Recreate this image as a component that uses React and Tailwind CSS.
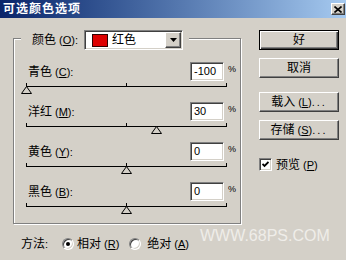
import React from "react";

const FONT = "font-['Liberation_Sans','Noto_Sans_CJK_SC',sans-serif]";

function Key({ k }) {
  return (
    <span className="text-[11px] ml-[3px]">
      (<span className="underline underline-offset-1">{k}</span>)
    </span>
  );
}

function Raised({ className = "", children, isDefault }) {
  const frame = isDefault
    ? "border border-black shadow-[inset_1px_1px_0_#fff,inset_-1px_-1px_0_#404040,inset_-2px_-2px_0_#808080]"
    : "border border-t-white border-l-white border-b-[#404040] border-r-[#404040] shadow-[inset_-1px_-1px_0_#808080]";
  return (
    <div className={`bg-[#d4d0c8] flex items-center justify-center ${frame} ${className}`}>
      {children}
    </div>
  );
}

const sunken =
  "border border-t-[#808080] border-l-[#808080] border-b-white border-r-white shadow-[inset_1px_1px_0_#404040,inset_-1px_-1px_0_#d4d0c8]";

function SliderSection({ zh, k, value }) {
  const pos = ((value + 100) / 200) * 200;
  return (
    <div className="h-[40px] pl-[12px]">
      <div className="flex items-center h-[19px] w-[212px]">
        <span className="ml-[2px] text-[12px] leading-none text-black">
          {zh}
          <Key k={k} />
          <span className="text-[11px]">:</span>
        </span>
        <div className={`ml-auto w-[34px] h-[19px] bg-white flex items-center pl-[3px] text-[11px] text-black ${sunken}`}>
          {value}
        </div>
        <span className="w-[14px] self-start pt-[3px] pl-[4px] text-[9px] leading-none text-black">%</span>
      </div>
      <div className="relative mt-[2px] w-[201px] h-[4px] border-b border-black flex justify-between">
        <span className="w-px h-[3px] bg-black" />
        <span className="w-px h-[3px] bg-black" />
        <span className="w-px h-[3px] bg-black" />
        <svg
          className="absolute top-[3px]"
          style={{ left: pos - 5 }}
          width="11"
          height="8"
          viewBox="0 0 11 8"
        >
          <path d="M5.5 0.5 L10.5 7.5 L0.5 7.5 Z" fill="#d4d0c8" stroke="#000" strokeWidth="1" />
        </svg>
      </div>
    </div>
  );
}

function Radio({ checked }) {
  return (
    <div className="w-[12px] h-[12px] rounded-full bg-white border border-t-[#808080] border-l-[#808080] border-b-white border-r-white shadow-[inset_1px_1px_0_#404040,inset_-1px_-1px_0_#d4d0c8] flex items-center justify-center">
      {checked && <div className="w-[4px] h-[4px] rounded-full bg-black" />}
    </div>
  );
}

export default function App() {
  return (
    <div className={`w-[346px] h-[260px] bg-[#d4d0c8] relative overflow-hidden ${FONT}`}>
      {/* Title bar */}
      <div className="h-[18px] flex items-center bg-gradient-to-r from-[#0a246a] to-[#a6caf0]">
        <span className="pl-[3px] text-white font-bold text-[12px] leading-none tracking-[1px]">可选颜色选项</span>
        <Raised className="ml-auto mr-[1px] w-[14px] h-[12px]">
          <svg width="8" height="7" viewBox="0 0 8 7">
            <path d="M0.5 0.5 L7.5 6.5 M7.5 0.5 L0.5 6.5" stroke="#000" strokeWidth="1.6" />
          </svg>
        </Raised>
      </div>

      <div className="flex">
        {/* Left column */}
        <div className="pl-[13px] pt-[20px]">
          <div className="w-[228px] h-[186px] border border-[#808080] shadow-[inset_1px_1px_0_#fff,1px_1px_0_#fff]">
            {/* Legend */}
            <div className="-mt-[9px] ml-[7px] w-fit pl-[11px] pr-[6px] h-[20px] bg-[#d4d0c8] flex items-center">
              <span className="w-[52px] text-[12px] leading-none text-black whitespace-nowrap">
                颜色
                <Key k="O" />
                <span className="text-[11px]">:</span>
              </span>
              <div className={`w-[99px] h-[20px] bg-white flex items-center ${sunken}`}>
                <div className="ml-[7px] w-[16px] h-[13px] bg-[#dd0000] border border-[#300000]" />
                <span className="ml-[4px] text-[12px] leading-none text-black">红色</span>
                <Raised className="ml-auto mr-[1px] w-[16px] h-[16px]">
                  <svg width="7" height="4" viewBox="0 0 7 4">
                    <path d="M0 0 H7 L3.5 4 Z" fill="#000" />
                  </svg>
                </Raised>
              </div>
            </div>

            <div className="mt-[12px]">
              <SliderSection zh="青色" k="C" value={-100} />
              <SliderSection zh="洋红" k="M" value={30} />
              <SliderSection zh="黄色" k="Y" value={0} />
              <SliderSection zh="黑色" k="B" value={0} />
            </div>
          </div>

          {/* Method row */}
          <div className="mt-[12px] h-[16px] pl-[8px] flex items-center text-black">
            <span className="w-[41px] text-[12px] leading-none">
              方法<span className="text-[11px]">:</span>
            </span>
            <Radio checked />
            <span className="ml-[3px] text-[12px] leading-none whitespace-nowrap">
              相对
              <Key k="R" />
            </span>
            <div className="ml-[10px]">
              <Radio />
            </div>
            <span className="ml-[6px] text-[12px] leading-none whitespace-nowrap">
              绝对
              <Key k="A" />
            </span>
          </div>
        </div>

        {/* Right column */}
        <div className="ml-[18px] pt-[12px] flex flex-col text-black">
          <Raised isDefault className="w-[80px] h-[20px]">
            <span className="text-[12px] leading-none">好</span>
          </Raised>
          <Raised className="mt-[8px] w-[80px] h-[20px]">
            <span className="text-[12px] leading-none">取消</span>
          </Raised>
          <Raised className="mt-[14px] w-[80px] h-[20px]">
            <span className="text-[12px] leading-none whitespace-nowrap">
              载入
              <Key k="L" />
              <span className="text-[11px] tracking-[2px]">...</span>
            </span>
          </Raised>
          <Raised className="mt-[8px] w-[80px] h-[20px]">
            <span className="text-[12px] leading-none whitespace-nowrap">
              存储
              <Key k="S" />
              <span className="text-[11px] tracking-[2px]">...</span>
            </span>
          </Raised>
          <div className="mt-[18px] flex items-center">
            <div className={`w-[13px] h-[13px] bg-white flex items-center justify-center ${sunken}`}>
              <svg width="7" height="7" viewBox="0 0 7 7">
                <path d="M0.5 3 L2.5 5 L6.5 1" stroke="#000" strokeWidth="1.8" fill="none" />
              </svg>
            </div>
            <span className="ml-[4px] text-[12px] leading-none whitespace-nowrap">
              预览
              <Key k="P" />
            </span>
          </div>
        </div>
      </div>

      {/* Watermark */}
      <div className="absolute left-[200px] top-[228px] text-[16px] leading-none text-[#efede9] font-['Liberation_Sans',sans-serif]">
        WWW.68PS.COM
      </div>
    </div>
  );
}
